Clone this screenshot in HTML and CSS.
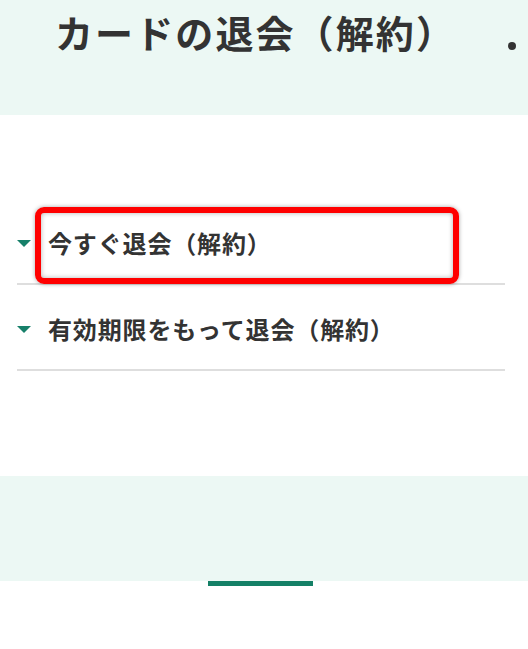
FILE: index.html
```html
<!DOCTYPE html>
<html>
<head>
    <title>カードの退会（解約）</title>
    <meta name="viewport" content="width=device-width, initial-scale=1">
    <link rel="stylesheet" href="styles.css">
</head>
<body>
    <div class="page-header">
        <h1 class="page-title">カードの退会（解約）</h1>
        <span class="title-dot"></span>
    </div>

    <div class="menu-list">
        <div class="menu-item">
            <span class="menu-arrow"></span>
            <span class="menu-text">今すぐ退会（解約）</span>
            <div class="highlight-box"></div>
        </div>
        <div class="menu-item">
            <span class="menu-arrow"></span>
            <span class="menu-text">有効期限をもって退会（解約）</span>
        </div>
    </div>

    <div class="footer-band"></div>
    <div class="footer-bar"></div>
</body>
</html>
```

FILE: styles.css
```css
body {
    margin: 0;
    font-family: "Noto Sans CJK JP", "Noto Sans", sans-serif;
    background-color: #fff;
    color: #333;
}
.page-header {
    height: 115px;
    background-color: #ecf8f4;
    display: flex;
    align-items: flex-start;
    padding-left: 55px;
    box-sizing: border-box;
    overflow: hidden;
}
.page-title {
    margin: 0;
    padding-top: 13px;
    font-size: 38px;
    line-height: 38px;
    font-weight: bold;
    letter-spacing: 2.1px;
    white-space: nowrap;
}
.title-dot {
    width: 8px;
    height: 8px;
    border-radius: 50%;
    background-color: #333;
    margin-top: 42px;
    margin-left: 52px;
    flex-shrink: 0;
}
.menu-list {
    margin: 84px 0 0 17px;
    width: 488px;
}
.menu-item {
    position: relative;
    display: flex;
    align-items: center;
    border-bottom: 2px solid #dedede;
    padding-top: 4px;
    box-sizing: border-box;
    height: 86px;
}
.menu-arrow {
    width: 0;
    height: 0;
    border-left: 7px solid transparent;
    border-right: 7px solid transparent;
    border-top: 7px solid #17806a;
    margin-right: 17px;
}
.menu-text {
    font-size: 24px;
    line-height: 24px;
    font-weight: bold;
    letter-spacing: 0.85px;
}
.highlight-box {
    position: absolute;
    left: 18px;
    top: 8px;
    width: 424px;
    height: 77px;
    box-sizing: border-box;
    border: 6px solid #ff0000;
    border-radius: 9px;
    box-shadow: 0 0 4px rgba(0,0,0,0.35), inset 0 0 5px rgba(0,0,0,0.3);
}
.footer-band {
    margin-top: 105px;
    height: 105px;
    background-color: #ecf8f4;
}
.footer-bar {
    width: 105px;
    height: 5px;
    margin-left: 208px;
    background-color: #148066;
}
```
